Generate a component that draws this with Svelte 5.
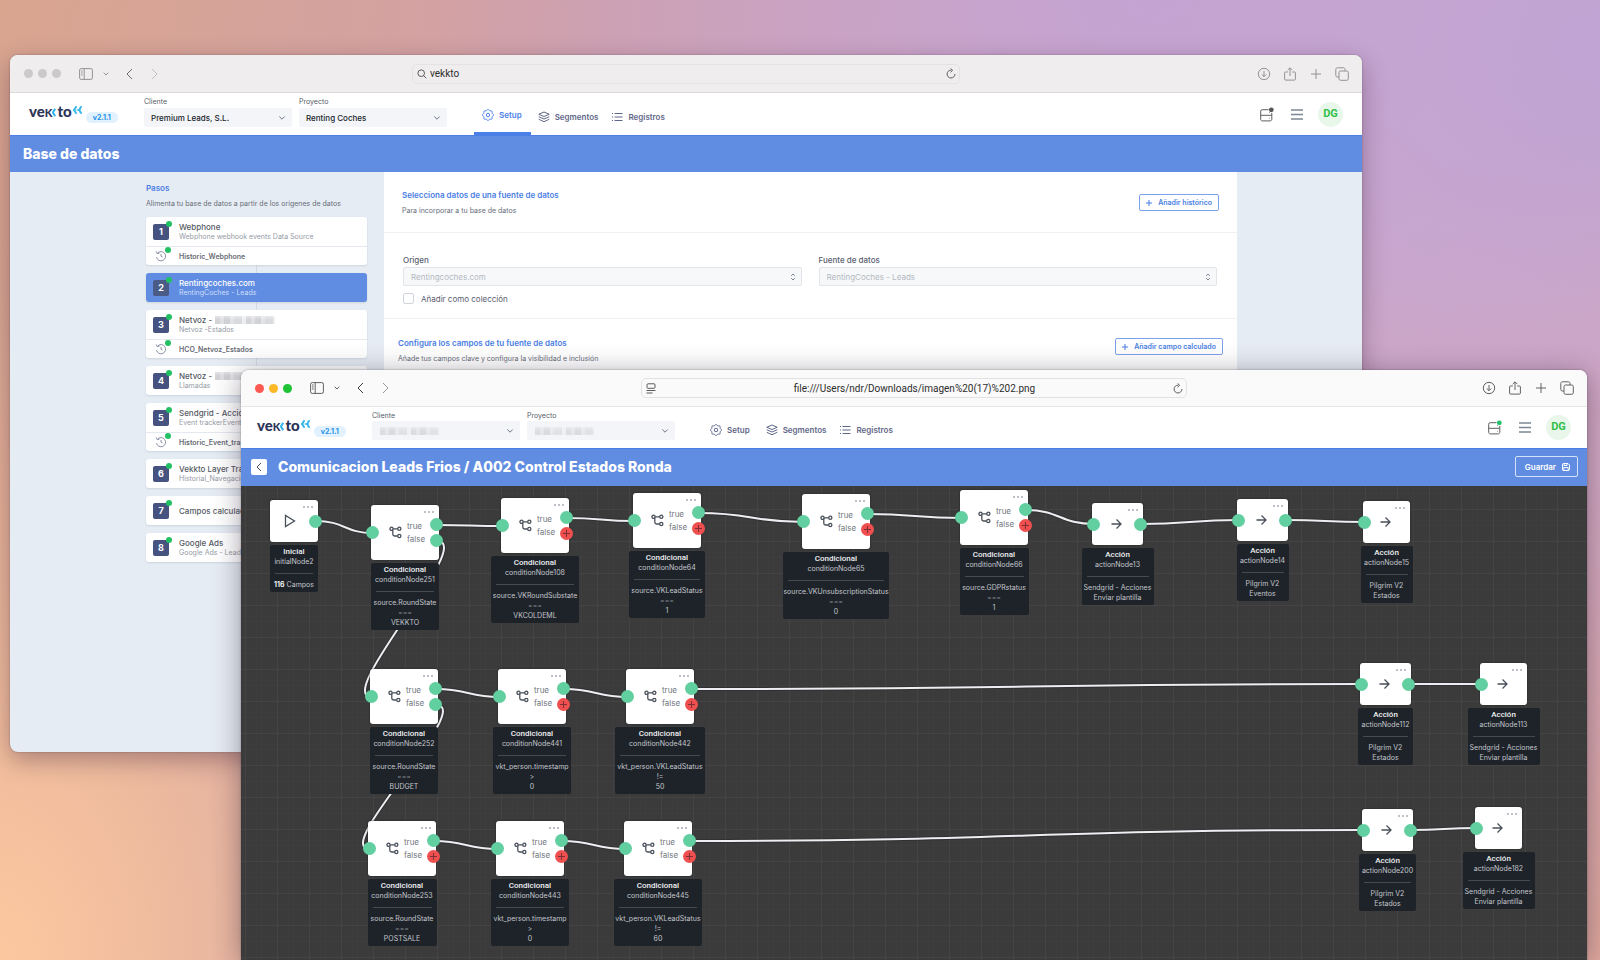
<script lang="ts">
	/**
	 * Desktop scene with two overlapping browser windows:
	 * the data base setup (behind) and the flow editor (in front).
	 */

	type Step = { title: string; sub?: string; blurred?: boolean; history?: string };

	type FlowNode = {
		id: string;
		kind: 'start' | 'condition' | 'action';
		x: number;
		y: number;
		label: number;
		lines: string[];
		last?: boolean;
		branch?: boolean;
	};

	const steps: Step[] = [
		{ title: 'Webphone', sub: 'Webphone webhook events Data Source', history: 'Historic_Webphone' },
		{ title: 'Rentingcoches.com', sub: 'RentingCoches - Leads' },
		{ title: 'Netvoz -', blurred: true, sub: 'Netvoz -Estados', history: 'HCO_Netvoz_Estados' },
		{ title: 'Netvoz -', blurred: true, sub: 'Llamadas' },
		{ title: 'Sendgrid - Accio', sub: 'Event trackerEvent', history: 'Historic_Event_tra' },
		{ title: 'Vekkto Layer Tra', sub: 'Historial_Navegacio' },
		{ title: 'Campos calculad' },
		{ title: 'Google Ads', sub: 'Google Ads - Lead F' }
	];
	const currentStep = 1;

	// Positions are relative to the flow canvas
	const nodes: FlowNode[] = [
		{ id: 'initialNode2', kind: 'start', x: 29, y: 14, label: 48, lines: ['Campos'] },
		{ id: 'conditionNode251', kind: 'condition', x: 130, y: 19, label: 68, lines: ['source.RoundState', '===', 'VEKKTO'], branch: true },
		{ id: 'conditionNode108', kind: 'condition', x: 260, y: 12, label: 88, lines: ['source.VKRoundSubstate', '===', 'VKCOLDEML'] },
		{ id: 'conditionNode64', kind: 'condition', x: 392, y: 7, label: 76, lines: ['source.VKLeadStatus', '===', '1'] },
		{ id: 'conditionNode65', kind: 'condition', x: 561, y: 8, label: 106, lines: ['source.VKUnsubscriptionStatus', '===', '0'] },
		{ id: 'conditionNode66', kind: 'condition', x: 719, y: 4, label: 69, lines: ['source.GDPRstatus', '===', '1'] },
		{ id: 'actionNode13', kind: 'action', x: 851, y: 17, label: 72, lines: ['Sendgrid - Acciones', 'Enviar plantilla'] },
		{ id: 'actionNode14', kind: 'action', x: 996, y: 13, label: 52, lines: ['Pilgrim V2', 'Eventos'] },
		{ id: 'actionNode15', kind: 'action', x: 1122, y: 15, label: 52, lines: ['Pilgrim V2', 'Estados'], last: true },
		{ id: 'conditionNode252', kind: 'condition', x: 129, y: 183, label: 68, lines: ['source.RoundState', '===', 'BUDGET'], branch: true },
		{ id: 'conditionNode441', kind: 'condition', x: 257, y: 183, label: 78, lines: ['vkt_person.timestamp', '>', '0'] },
		{ id: 'conditionNode442', kind: 'condition', x: 385, y: 183, label: 90, lines: ['vkt_person.VKLeadStatus', '!=', '50'] },
		{ id: 'actionNode112', kind: 'action', x: 1119, y: 177, label: 55, lines: ['Pilgrim V2', 'Estados'] },
		{ id: 'actionNode113', kind: 'action', x: 1239, y: 177, label: 72, lines: ['Sendgrid - Acciones', 'Enviar plantilla'], last: true },
		{ id: 'conditionNode253', kind: 'condition', x: 127, y: 335, label: 69, lines: ['source.RoundState', '===', 'POSTSALE'] },
		{ id: 'conditionNode443', kind: 'condition', x: 255, y: 335, label: 78, lines: ['vkt_person.timestamp', '>', '0'] },
		{ id: 'conditionNode445', kind: 'condition', x: 383, y: 335, label: 88, lines: ['vkt_person.VKLeadStatus', '!=', '60'] },
		{ id: 'actionNode200', kind: 'action', x: 1121, y: 323, label: 57, lines: ['Pilgrim V2', 'Estados'] },
		{ id: 'actionNode182', kind: 'action', x: 1234, y: 321, label: 72, lines: ['Sendgrid - Acciones', 'Enviar plantilla'], last: true }
	];

	const rows = [
		['initialNode2', 'conditionNode251', 'conditionNode108', 'conditionNode64', 'conditionNode65', 'conditionNode66', 'actionNode13', 'actionNode14', 'actionNode15'],
		['conditionNode252', 'conditionNode441', 'conditionNode442', 'actionNode112', 'actionNode113'],
		['conditionNode253', 'conditionNode443', 'conditionNode445', 'actionNode200', 'actionNode182']
	];

	const titles = { start: 'Inicial', condition: 'Condicional', action: 'Acción' };

	function find(id: string): FlowNode {
		return nodes.find((n) => n.id === id) as FlowNode;
	}

	function boxWidth(n: FlowNode) {
		if (n.kind === 'condition') return 68;
		if (n.kind === 'start') return 48;
		return n.last ? 47 : 51;
	}

	function source(n: FlowNode) {
		return { x: n.x + boxWidth(n) - 2, y: n.y + (n.kind === 'condition' ? 20 : 21) };
	}

	function target(n: FlowNode) {
		return { x: n.x + 2, y: n.y + (n.kind === 'condition' ? 28 : 21) };
	}

	function forward(from: string, to: string) {
		const a = source(find(from));
		const b = target(find(to));
		const mid = (a.x + b.x) / 2;
		return `M${a.x},${a.y} C${mid},${a.y} ${mid},${b.y} ${b.x},${b.y}`;
	}

	// A "false" output that drops to the row below
	function backward(from: string, to: string) {
		const a = source(find(from));
		const b = target(find(to));
		return `M${a.x},${a.y + 16} C${a.x + 40},${a.y + 16} ${b.x - 40},${b.y} ${b.x},${b.y}`;
	}

	const edges = [
		...rows.flatMap((row) => row.slice(1).map((id, i) => forward(row[i], id))),
		backward('conditionNode251', 'conditionNode252'),
		backward('conditionNode252', 'conditionNode253')
	];

	// Scalloped outline with eight teeth
	const gear = Array.from({ length: 64 }, (_, i) => {
		const t = (i / 64) * Math.PI * 2;
		const r = 10 + 1.1 * Math.cos(8 * t);
		return `${(12 + r * Math.cos(t)).toFixed(2)},${(12 + r * Math.sin(t)).toFixed(2)}`;
	}).join(' ');
</script>

{#snippet toolbar(url: string, searching: boolean)}
	<div class="toolbar">
		<div class="tools">
			<div class="lights"><i></i><i></i><i></i></div>
			<button aria-label="Barra lateral">
				<svg width="14" height="12" viewBox="0 0 14 12"><rect x=".6" y=".6" width="12.8" height="10.8" rx="1.6" /><path d="M5.2 .6v10.8M2 3h1.600M2 5h1.600M2 7h1.600" /></svg>
			</button>
			<button class="drop" aria-label="Grupos de pestañas">
				<svg width="6" height="4" viewBox="0 0 6 4"><path d="M.7 .7 3 3 5.300 .7" /></svg>
			</button>
			<button class="prev" aria-label="Atrás">
				<svg width="7" height="12" viewBox="0 0 7 12"><path d="M6 1 1 6l5 5" /></svg>
			</button>
			<button class="next" aria-label="Adelante">
				<svg width="7" height="12" viewBox="0 0 7 12"><path d="m1 1 5 5-5 5" /></svg>
			</button>
		</div>
		<div class="address" class:searching>
			{#if searching}
				<svg width="10" height="10" viewBox="0 0 10 10"><circle cx="4.200" cy="4.200" r="3.300" /><path d="m6.700 6.700 2.600 2.600" /></svg>
			{:else}
				<svg width="10" height="11" viewBox="0 0 10 11"><rect x="1" y=".8" width="8" height="4.500" rx="1" /><path d="M.5 7.500h9M.5 10h6" /></svg>
			{/if}
			<input type="text" aria-label="Dirección" value={url} />
			<svg class="reload" width="10" height="11" viewBox="0 0 10 11"><path d="M5.200 2.200A3.900 3.900 0 1 0 8.900 6M4.600 .4l2 1.900-2 1.900" /></svg>
		</div>
		<div class="tools end">
			<button aria-label="Descargas">
				<svg width="14" height="14" viewBox="0 0 14 14"><circle cx="7" cy="7" r="5.700" /><path d="M7 4v5.500M4.700 7.400 7 9.700l2.300-2.300" /></svg>
			</button>
			<button aria-label="Compartir">
				<svg width="14" height="14" viewBox="0 0 14 14"><path d="M4.800 5H2.500a.9.900 0 0 0-.9.900v6.300c0 .5.400.9.900.9h9c.5 0 .9-.4.900-.9V5.900a.9.900 0 0 0-.9-.9H9.200M7 9V.9M4.700 3.100 7 .8l2.300 2.300" /></svg>
			</button>
			<button aria-label="Nueva pestaña">
				<svg width="14" height="14" viewBox="0 0 14 14"><path d="M7 2v10M2 7h10" /></svg>
			</button>
			<button aria-label="Pestañas">
				<svg width="14" height="14" viewBox="0 0 14 14"><rect x="4" y="4" width="9.300" height="9.300" rx="1.600" /><path d="M4 10H2.300A1.500 1.500 0 0 1 .8 8.500V2.300C.8 1.500 1.500.8 2.300.8h6.200c.8 0 1.500.7 1.500 1.500V4" /></svg>
			</button>
		</div>
	</div>
{/snippet}

{#snippet picker(id: string, label: string, value: string)}
	<div class="picker">
		<label for={id}>{label}</label>
		<div class="select">
			<select {id}><option>{value}</option></select>
			{#if !value}
				<span class="mosaic"></span>
			{/if}
			<svg width="8" height="6" viewBox="0 0 8 6"><path d="M1.300 1.500 4 4.200l2.700-2.700" /></svg>
		</div>
	</div>
{/snippet}

{#snippet header(key: string, client: string, project: string, setup: boolean)}
	<header>
		<div class="brand">
			<span class="logo">
				ve<span class="cap">k</span><svg width="4" height="9" viewBox="0 0 4 9"><path d="M3.200.8.900 4.500l2.300 3.700" /></svg>to
			</span>
			<svg class="wings" width="10" height="8" viewBox="0 0 10 8"><path d="M3.800.8C1.700 1 2.500 3.500 1 4c1.500.5.7 3 2.800 3.200M8.800.8C6.700 1 7.500 3.500 6 4c1.500.5.7 3 2.800 3.200" /></svg>
			<span class="version">v2.1.1</span>
		</div>
		{@render picker(key + '-client', 'Cliente', client)}
		{@render picker(key + '-project', 'Proyecto', project)}
		<nav>
			<a href="#setup" class:active={setup}>
				<svg width="12" height="12" viewBox="0 0 24 24"><circle cx="12" cy="12" r="3.500" /><polygon points={gear} /></svg>
				Setup
			</a>
			<a href="#segmentos">
				<svg width="12" height="12" viewBox="0 0 24 24"><path d="m12 2 10.500 4.500L12 11 1.500 6.500zM1.500 11.500 12 16l10.500-4.500M1.500 16.500 12 21.500l10.500-5" /></svg>
				Segmentos
			</a>
			<a href="#registros">
				<svg width="12" height="12" viewBox="0 0 24 24"><path d="M7 5h16M7 12h16M7 19h16M2 5h2M2 12h2M2 19h2" /></svg>
				Registros
			</a>
		</nav>
		<div class="account">
			<button aria-label="Estado del servidor">
				<svg width="15" height="15" viewBox="0 0 15 15"><path d="M9.500 2.700H3.200a1.500 1.500 0 0 0-1.500 1.500v8.200c0 .8.700 1.500 1.500 1.500h8.100c.8 0 1.500-.7 1.500-1.500V6M1.700 8.300h11.100M10.300 11.200h.6M10.300 5.600h.6" /><circle class="dot" cx="12.300" cy="2.800" r="2.400" /></svg>
			</button>
			<button aria-label="Menú">
				<svg width="12" height="11" viewBox="0 0 12 11"><path d="M0 1h12M0 5.500h12M0 10h12" /></svg>
			</button>
			<span class="avatar">DG</span>
		</div>
	</header>
{/snippet}

{#snippet plus()}
	<svg width="8" height="8" viewBox="0 0 8 8"><path d="M4 1v6M1 4h6" /></svg>
{/snippet}

<div class="desktop">
	<!-- Data base setup -->
	<section class="window back">
		{@render toolbar('vekkto', true)}
		{@render header('setup', 'Premium Leads, S.L.', 'Renting Coches', true)}
		<div class="bar"><h1>Base de datos</h1></div>
		<div class="body">
			<aside>
				<h2>Pasos</h2>
				<p>Alimenta tu base de datos a partir de los orígenes de datos</p>
				<ol>
					{#each steps as step, i}
						<li class:current={i === currentStep}>
							<div class="step">
								<span class="num">{i + 1}</span>
								<div>
									<strong>{step.title}{#if step.blurred}<span class="mosaic"></span>{/if}</strong>
									{#if step.sub}<small>{step.sub}</small>{/if}
								</div>
							</div>
							{#if step.history}
								<div class="history">
									<span class="clock">
										<svg width="12" height="12" viewBox="0 0 12 12"><path d="M2.500 3.200a4.600 4.600 0 1 1-1 4M1.300 1.500l.9 2.200 2.300-.6M6 4v2.200l1.500.8" /></svg>
									</span>
									{step.history}
								</div>
							{/if}
						</li>
					{/each}
				</ol>
			</aside>
			<main>
				<div class="section intro">
					<div>
						<h2>Selecciona datos de una fuente de datos</h2>
						<p>Para incorporar a tu base de datos</p>
					</div>
					<button class="outline">{@render plus()} Añadir histórico</button>
				</div>
				<div class="section fields">
					{#each [['origin', 'Origen', 'Rentingcoches.com'], ['feed', 'Fuente de datos', 'RentingCoches - Leads']] as [id, label, value]}
						<div class="field">
							<label for={id}>{label}</label>
							<div class="select">
								<select {id} disabled><option>{value}</option></select>
								<svg width="6" height="8" viewBox="0 0 6 8"><path d="M1.200 2.800 3 1l1.800 1.800M1.200 5.200 3 7l1.800-1.800" /></svg>
							</div>
						</div>
					{/each}
					<label class="check"><input type="checkbox" /> Añadir como colección</label>
				</div>
				<div class="section config">
					<div>
						<h2>Configura los campos de tu fuente de datos</h2>
						<p>Añade tus campos clave y configura la visibilidad e inclusión</p>
					</div>
					<button class="outline">{@render plus()} Añadir campo calculado</button>
				</div>
			</main>
		</div>
	</section>

	<!-- Flow editor -->
	<section class="window front">
		{@render toolbar('file:///Users/ndr/Downloads/imagen%20(17)%202.png', false)}
		{@render header('flow', '', '', false)}
		<div class="bar">
			<button class="return" aria-label="Volver">
				<svg width="6" height="10" viewBox="0 0 6 10"><path d="M5 1 1 5l4 4" /></svg>
			</button>
			<h1>Comunicacion Leads Frios / A002 Control Estados Ronda</h1>
			<button class="save">
				Guardar
				<svg width="8" height="8" viewBox="0 0 8 8"><path d="M.5 1.300C.5.900.9.500 1.300.5h4.700l1.500 1.500v4.700c0 .4-.4.800-.8.800H1.300a.8.800 0 0 1-.8-.8zM2 .7v1.800h3V.7M1.800 7.300V4.600h4.400v2.700" /></svg>
			</button>
		</div>
		<div class="canvas">
			<svg class="edges">
				{#each edges as d}
					<path class="halo" {d} />
					<path {d} />
				{/each}
			</svg>
			{#each nodes as node}
				<div class="node" style="left: {node.x}px; top: {node.y}px; width: {boxWidth(node)}px">
					<div class="box {node.kind}">
						<span class="more"><i></i><i></i><i></i></span>
						{#if node.kind === 'start'}
							<svg width="12" height="14" viewBox="0 0 12 14"><path d="M1.500 1.500v11L10.500 7z" /></svg>
						{:else if node.kind === 'action'}
							<svg width="11" height="12" viewBox="0 0 11 12"><path d="M.5 6h9.500M5.500 1.500 10 6l-4.500 4.500" /></svg>
						{:else}
							<svg width="13" height="13" viewBox="0 0 13 13"><circle cx="2.500" cy="2.800" r="1.600" /><circle cx="10.300" cy="2.800" r="1.600" /><circle cx="10.300" cy="10" r="1.600" /><path d="M4.100 2.800h4.600M3.800 3.800v4.400c0 1.100.7 1.800 1.800 1.800h3.100" /></svg>
							<span class="outs"><span>true</span><span>false</span></span>
						{/if}
						{#if node.kind !== 'start'}<span class="handle in"></span>{/if}
						{#if !node.last}<span class="handle out"></span>{/if}
						{#if node.kind === 'condition'}
							<span class="handle no" class:open={!node.branch}>
								{#if !node.branch}
									<svg width="9" height="9" viewBox="0 0 9 9"><path d="M4.500 1v7M1 4.500h7" /></svg>
								{/if}
							</span>
						{/if}
					</div>
					<div class="tag" style="width: {node.label}px">
						<b>{titles[node.kind]}</b>
						<span>{node.id}</span>
						<hr />
						{#each node.lines as line}
							<span class:eq={line === '==='}>{#if node.kind === 'start'}<b>116</b>{' '}{/if}{line}</span>
						{/each}
					</div>
				</div>
			{/each}
		</div>
	</section>
</div>

<style>
	:global(body) {
		font-family: Inter, 'Liberation Sans', sans-serif;
		overflow: hidden;
	}

	:global(svg) {
		display: block;
		flex: none;
		fill: none;
		stroke: currentColor;
		stroke-width: 1;
	}

	.desktop {
		position: relative;
		height: 100vh;
		overflow: hidden;
		background:
			radial-gradient(ellipse 45% 50% at 72% 0%, #c4a3d2 0%, rgba(196, 163, 210, 0) 100%),
			radial-gradient(ellipse 30% 40% at 100% 5%, #bda4d5 0%, rgba(189, 164, 213, 0) 100%),
			radial-gradient(ellipse 30% 70% at 0% 100%, #fcc8a0 0%, rgba(252, 200, 160, 0) 100%),
			radial-gradient(ellipse 20% 50% at 100% 100%, #e0a89c 0%, rgba(224, 168, 156, 0) 100%),
			linear-gradient(100deg, #d9a58f 0%, #d0a0aa 35%, #cfa9c8 75%, #d1a6c0 100%);
	}

	button,
	input,
	select {
		font: inherit;
		color: inherit;
		margin: 0;
		padding: 0;
		border: 0;
		background: none;
	}

	h1,
	h2,
	p,
	ol {
		margin: 0;
		padding: 0;
	}

	/* Windows */
	.window {
		position: absolute;
		display: flex;
		flex-direction: column;
		overflow: hidden;
		background: #e6ecf3;
	}

	.back {
		left: 10px;
		right: 238px;
		top: 55px;
		bottom: 208px;
		border-radius: 8px;
		box-shadow: 0 8px 24px rgba(70, 40, 60, 0.4), 0 0 2px rgba(60, 40, 60, 0.4);
	}

	.front {
		left: 241px;
		right: 13px;
		top: 370px;
		bottom: 0;
		border-radius: 8px 8px 0 0;
		box-shadow: 0 4px 28px rgba(50, 40, 60, 0.45), 0 0 2px rgba(60, 50, 60, 0.5);
	}

	.toolbar {
		display: grid;
		grid-template-columns: 1fr minmax(0, 548px) 1fr;
		align-items: center;
		flex: none;
		height: 37px;
		border-bottom: 1px solid #dcdadb;
		background: #efeded;
		color: #939293;
	}

	.front .toolbar {
		grid-template-columns: 1fr minmax(0, 546px) 1fr;
		height: 36px;
		border-color: #e6e6e6;
		background: #fafafa;
		color: #626262;
	}

	.tools {
		display: flex;
		align-items: center;
		padding-left: 14px;
	}

	.tools.end {
		justify-content: flex-end;
		gap: 12px;
		padding: 0 13px 0 0;
	}

	.lights {
		display: flex;
		gap: 5px;
		margin-right: 18px;
	}

	.lights i {
		width: 9px;
		height: 9px;
		border-radius: 50%;
		background: #cbc9ca;
	}

	.front .lights i {
		background: #fb5952;
	}

	.front .lights i:nth-child(2) {
		background: #fdb827;
	}

	.front .lights i:nth-child(3) {
		background: #1fc336;
	}

	.drop {
		margin-left: 10px;
	}

	.prev {
		margin-left: 17px;
		color: #6c6b6c;
	}

	.front .prev {
		color: #3c3c3c;
	}

	.next {
		margin-left: 18px;
		color: #c2c0c1;
	}

	.front .next {
		color: #9a9a9a;
	}

	.address {
		display: flex;
		align-items: center;
		gap: 3px;
		height: 18px;
		padding: 0 3px 0 4px;
		border: 1px solid #e4e2e3;
		border-radius: 5px;
		font-family: Roboto, sans-serif;
		font-size: 10px;
		color: #5c5b5c;
	}

	.front .address {
		border-color: #e2e2e2;
	}

	.address input {
		flex: 1;
		min-width: 0;
		color: #2d2d2d;
		text-align: center;
	}

	.address.searching input {
		text-align: left;
	}

	/* Application header */
	header {
		display: flex;
		flex: none;
		height: 42px;
		padding: 0 19px;
		background: #fff;
		color: #5b6275;
	}

	.front header {
		height: 41px;
		padding: 0 16px;
	}

	.brand {
		display: flex;
		width: 115px;
		padding-top: 8px;
	}

	.logo {
		display: flex;
		align-items: center;
		height: 20px;
		font-family: Lato, sans-serif;
		font-size: 15px;
		font-weight: 900;
		color: #2b3358;
	}

	.cap {
		font-variant: small-caps;
	}

	.logo svg,
	.wings {
		color: #35b5ea;
		stroke-width: 2;
	}

	.logo svg {
		margin: 3px 1px 0 0;
	}

	.wings {
		margin: 5px 3px 0 1px;
	}

	.version {
		height: 11px;
		margin-top: 11px;
		padding: 0 7px;
		border-radius: 6px;
		background: #e1f1fd;
		font-size: 7px;
		font-weight: 700;
		line-height: 11px;
		color: #2491ea;
	}

	.picker {
		width: 148px;
		margin-right: 7px;
		padding-top: 4px;
	}

	.picker label {
		display: block;
		font-size: 7px;
		line-height: 9px;
		margin-bottom: 2px;
		color: #565c68;
	}

	.front .picker label {
		margin-bottom: 1px;
	}

	.select {
		position: relative;
	}

	.select select {
		display: block;
		width: 100%;
		height: 19px;
		padding: 0 7px;
		border-radius: 2px;
		appearance: none;
		background: #f3f5f8;
		font-size: 8px;
		font-weight: 500;
		color: #20242c;
	}

	.select svg {
		position: absolute;
		right: 6px;
		top: 7px;
		color: #6b7486;
	}

	.mosaic {
		display: inline-block;
		width: 60px;
		height: 8px;
		background:
			linear-gradient(rgba(255, 255, 255, 0.4), rgba(255, 255, 255, 0) 50%),
			repeating-linear-gradient(90deg, #d3d4d7 0 5px, #dfe0e2 5px 9px, #cfd1d4 9px 15px, #e2e3e5 15px 19px, #d9dadd 19px 27px, #edeef0 27px 31px);
	}

	.select .mosaic {
		position: absolute;
		left: 8px;
		top: 6px;
		opacity: 0.7;
	}

	nav {
		display: flex;
		margin-left: 20px;
		gap: 13px;
	}

	nav a {
		display: flex;
		align-items: center;
		gap: 5px;
		height: 41px;
		padding: 5px 0 0;
		box-sizing: border-box;
		font-size: 8px;
		font-weight: 600;
		color: #5f6788;
		text-decoration: none;
	}

	nav svg {
		stroke-width: 2;
	}

	nav a:first-child {
		padding: 5px 9px 0 8px;
		margin-right: -6px;
	}

	nav a.active {
		border-bottom: 3px solid #4a7fe8;
		color: #4a7fe8;
	}

	.back nav a {
		height: 42px;
	}

	.account {
		display: flex;
		align-items: center;
		gap: 17px;
		margin-left: auto;
		color: #5e5e5e;
	}

	.account .dot {
		fill: #555;
		stroke: none;
	}

	.front .account .dot {
		fill: #21bf65;
	}

	.account button + button {
		color: #7c8692;
	}

	.account button + button svg {
		stroke-width: 1.5;
	}

	.avatar {
		width: 25px;
		height: 25px;
		margin-left: -2px;
		border-radius: 50%;
		background: #e8f7ea;
		font-family: Roboto, sans-serif;
		font-size: 11px;
		font-weight: 700;
		line-height: 23px;
		text-align: center;
		color: #31c048;
	}

	.bar {
		display: flex;
		align-items: center;
		flex: none;
		height: 37px;
		padding: 0 9px 2px 13px;
		box-sizing: border-box;
		border-top: 1px solid #4c80e6;
		background: #608ce2;
		color: #fff;
	}

	.front .bar {
		height: 38px;
		padding-left: 10px;
	}

	h1 {
		font-size: 14px;
		font-weight: 800;
	}

	.return {
		display: grid;
		place-items: center;
		width: 16px;
		height: 16px;
		margin-right: 11px;
		border-radius: 2px;
		background: #fff;
		color: #4d5160;
	}

	.save {
		display: flex;
		align-items: center;
		gap: 6px;
		height: 21px;
		margin-left: auto;
		padding: 0 7px 0 9px;
		border: 1px solid #d5e1f8;
		border-radius: 2px;
		font-size: 8px;
		font-weight: 600;
	}

	/* Steps and form */
	.body {
		display: grid;
		grid-template-columns: 221px 1fr;
		gap: 17px;
		flex: 1;
		padding: 0 125px 0 136px;
		color: #5a6070;
	}

	h2 {
		font-size: 8px;
		font-weight: 600;
		line-height: 10px;
		color: #4a7ee3;
	}

	p {
		margin-top: 6px;
		font-size: 7px;
		line-height: 10px;
		color: #666c78;
		white-space: nowrap;
	}

	aside {
		padding-top: 11px;
	}

	ol {
		display: flex;
		flex-direction: column;
		gap: 8px;
		margin-top: 8px;
		list-style: none;
		background: linear-gradient(#d3dae4, #d3dae4) 110px 0 / 1px 100% no-repeat;
	}

	li {
		border-radius: 3px;
		background: #fff;
		box-shadow: 0 1px 2px rgba(90, 110, 140, 0.18);
	}

	.step {
		display: flex;
		align-items: center;
		gap: 10px;
		height: 29px;
		padding-left: 7px;
	}

	.num {
		position: relative;
		width: 16px;
		height: 16px;
		border-radius: 2px;
		background: #465380;
		font-size: 9px;
		font-weight: 700;
		line-height: 15px;
		text-align: center;
		color: #fff;
	}

	.num::after,
	.clock::after {
		content: '';
		position: absolute;
		right: -3px;
		top: -3px;
		width: 6px;
		height: 6px;
		border-radius: 50%;
		background: #21c063;
	}

	.step strong,
	.step small {
		display: flex;
		align-items: center;
		gap: 3px;
		font-size: 8px;
		font-weight: 500;
		line-height: 10px;
		white-space: nowrap;
		color: #565a64;
	}

	.step small {
		font-size: 7px;
		font-weight: 400;
		color: #969ba6;
	}

	.history {
		display: flex;
		align-items: center;
		gap: 11px;
		height: 18px;
		padding-left: 9px;
		border-top: 1px solid #e4e9f0;
		font-size: 7px;
		font-weight: 600;
		color: #676b75;
	}

	.clock {
		position: relative;
		width: 13px;
		color: #8b92a8;
	}

	.current {
		background: #608ce2;
	}

	.current strong {
		color: #fff;
	}

	.current small {
		color: #cfdefa;
	}

	.current .num {
		background: #4a5c85;
	}

	main {
		background: #fff;
	}

	.section {
		display: flex;
		justify-content: space-between;
		align-items: flex-start;
		box-sizing: border-box;
		padding: 18px 18px 0;
		border-bottom: 1px solid #f0f2f6;
	}

	.section.intro {
		height: 61px;
	}

	.section.config {
		padding: 19px 14px 0;
		border: 0;
	}

	.outline {
		display: flex;
		align-items: center;
		gap: 5px;
		height: 17px;
		margin-top: 4px;
		padding: 0 6px 0 5px;
		border: 1px solid #7ba0ee;
		border-radius: 2px;
		font-size: 7px;
		font-weight: 600;
		color: #4a7ee3;
	}

	.config .outline {
		margin-top: 0;
	}

	.section.fields {
		display: grid;
		grid-template-columns: 1fr 1fr;
		align-content: start;
		gap: 7px 17px;
		height: 86px;
		padding: 21px 20px 0 19px;
	}

	.field label {
		display: block;
		font-size: 8px;
		line-height: 12px;
		margin-bottom: 1px;
		font-weight: 500;
	}

	.field select {
		border: 1px solid #e3e5ea;
		background: #f7f8fa;
		font-weight: 400;
		color: #b3b8c2;
		opacity: 1;
	}

	.field svg {
		top: 6px;
		color: #7d8492;
	}

	.check {
		display: flex;
		align-items: center;
		gap: 7px;
		font-size: 8px;
	}

	.check input {
		width: 11px;
		height: 11px;
		appearance: none;
		border: 1px solid #cfd4dd;
		border-radius: 2px;
		background: #fff;
	}

	/* Flow canvas */
	.canvas {
		position: relative;
		flex: 1;
		overflow: hidden;
		background-color: #3b3b3b;
		background-image:
			linear-gradient(#444 1px, transparent 1px),
			linear-gradient(90deg, #444 1px, transparent 1px),
			linear-gradient(#3e3e3e 1px, transparent 1px),
			linear-gradient(90deg, #3e3e3e 1px, transparent 1px);
		background-size: 32px 32px, 32px 32px, 16px 16px, 16px 16px;
		background-position: 4px 23px;
	}

	.canvas .edges {
		position: absolute;
		inset: 0;
		width: 100%;
		height: 100%;
		stroke: #eeeef2;
		stroke-width: 2;
	}

	.edges .halo {
		stroke: rgba(30, 32, 36, 0.4);
		stroke-width: 4;
	}

	.node {
		position: absolute;
		display: flex;
		flex-direction: column;
		align-items: center;
		gap: 3px;
	}

	.box {
		position: relative;
		display: flex;
		align-items: center;
		justify-content: center;
		width: 100%;
		height: 42px;
		padding-right: 2px;
		box-sizing: border-box;
		border-radius: 3px;
		background: #fff;
		box-shadow: 0 0 2px #1d1f22;
		color: #4a505a;
	}

	.box.start {
		padding-right: 8px;
	}

	.box.condition {
		justify-content: flex-start;
		gap: 5px;
		height: 55px;
		padding-left: 18px;
	}

	.box > svg {
		stroke-width: 1.3;
	}

	.outs {
		display: flex;
		flex-direction: column;
		font-size: 8px;
		line-height: 13px;
		color: #747780;
	}

	.more {
		position: absolute;
		right: 5px;
		top: 6px;
		display: flex;
		gap: 2px;
	}

	.more i {
		width: 2px;
		height: 2px;
		border-radius: 50%;
		background: #a9adb8;
	}

	.handle {
		position: absolute;
		width: 13px;
		height: 13px;
		border-radius: 50%;
		background: #62cfa0;
	}

	.handle.in {
		left: -5px;
		top: 15px;
	}

	.handle.out {
		right: -4px;
		top: 15px;
	}

	.condition .handle.in {
		top: 21px;
	}

	.condition .handle.out {
		top: 13px;
	}

	.handle.no {
		right: -4px;
		top: 29px;
	}

	.handle.open {
		display: grid;
		place-items: center;
		background: #ef4f4f;
		color: #7c3036;
	}

	.tag {
		display: flex;
		flex-direction: column;
		align-items: center;
		padding: 2px 5px 2px;
		box-sizing: border-box;
		border-radius: 2px;
		background: #1e232a;
		font-size: 7px;
		line-height: 10px;
		white-space: nowrap;
		color: #c3c6ca;
	}

	.tag > b {
		font-family: Roboto, sans-serif;
		font-size: 8px;
	}

	.tag b {
		font-weight: 500;
		color: #f0f1f2;
	}

	.tag span b {
		font-weight: 700;
	}

	.tag hr {
		width: 100%;
		height: 1px;
		margin: 6px 0;
		border: 0;
		background: #454a51;
	}

	.tag .eq {
		color: #85898f;
	}
</style>
